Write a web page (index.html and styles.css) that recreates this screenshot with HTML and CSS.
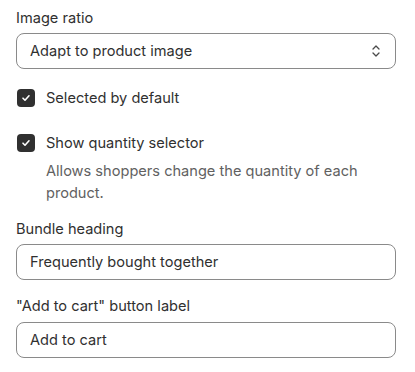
FILE: index.html
```html
<!DOCTYPE html>
<html lang="en">
<head>
    <meta charset="UTF-8">
    <meta name="viewport" content="width=device-width, initial-scale=1.0">
    <title>Bundle settings</title>
    <link rel="stylesheet" href="styles.css">
</head>
<body>
    <div class="settings">
        <div class="field">
            <label class="field-label">Image ratio</label>
            <div class="select-box">
                <span>Adapt to product image</span>
                <svg class="select-icon" width="10" height="16" viewBox="0 0 10 16">
                    <path d="M2 6l3-3 3 3M2 10l3 3 3-3" fill="none" stroke="#4a4a4a" stroke-width="1.3" stroke-linecap="round" stroke-linejoin="round"/>
                </svg>
            </div>
        </div>

        <div class="check-row">
            <span class="checkbox">
                <svg width="10" height="10" viewBox="0 0 10 10"><path d="M2 5.2l2 2 4-4.4" fill="none" stroke="#fff" stroke-width="1.6" stroke-linecap="round" stroke-linejoin="round"/></svg>
            </span>
            <span class="check-label">Selected by default</span>
        </div>

        <div class="check-row">
            <span class="checkbox">
                <svg width="10" height="10" viewBox="0 0 10 10"><path d="M2 5.2l2 2 4-4.4" fill="none" stroke="#fff" stroke-width="1.6" stroke-linecap="round" stroke-linejoin="round"/></svg>
            </span>
            <div>
                <span class="check-label">Show quantity selector</span>
                <p class="help-text">Allows shoppers change the quantity of each product.</p>
            </div>
        </div>

        <div class="field field-after-check">
            <label class="field-label">Bundle heading</label>
            <div class="text-box">Frequently bought together</div>
        </div>

        <div class="field">
            <label class="field-label">"Add to cart" button label</label>
            <div class="text-box">Add to cart</div>
        </div>
    </div>
</body>
</html>
```

FILE: styles.css
```css
body {
    font-family: Inter, "Noto Sans", sans-serif;
    font-size: 14.6px;
    color: #303030;
    background-color: #fff;
    margin: 0;
}
.settings {
    padding: 8px 19px 0 16px;
    display: flex;
    flex-direction: column;
}
.field {
    display: flex;
    flex-direction: column;
}
.field-label {
    line-height: 20px;
    margin-bottom: 5px;
}
.select-box,
.text-box {
    height: 36px;
    box-sizing: border-box;
    border: 1px solid #8a8a8a;
    border-radius: 8px;
    padding: 0 13px;
    display: flex;
    align-items: center;
    justify-content: space-between;
    line-height: 20px;
}
.select-icon {
    margin-right: 1px;
}
.check-row {
    display: flex;
    align-items: flex-start;
    gap: 11px;
    margin-top: 20px;
}
.check-row + .check-row {
    margin-top: 26px;
}
.checkbox {
    width: 18px;
    height: 18px;
    border-radius: 4px;
    background-color: #303030;
    display: flex;
    align-items: center;
    justify-content: center;
    flex-shrink: 0;
    margin-left: 1px;
}
.check-label {
    line-height: 20px;
    margin-top: -1px;
    display: block;
}
.help-text {
    margin: 7px 0 0;
    color: #616161;
    line-height: 22px;
}
.field-after-check {
    margin-top: 15px;
}
.field + .field {
    margin-top: 16px;
}
.field + .field .field-label {
    margin-bottom: 6px;
}
```
